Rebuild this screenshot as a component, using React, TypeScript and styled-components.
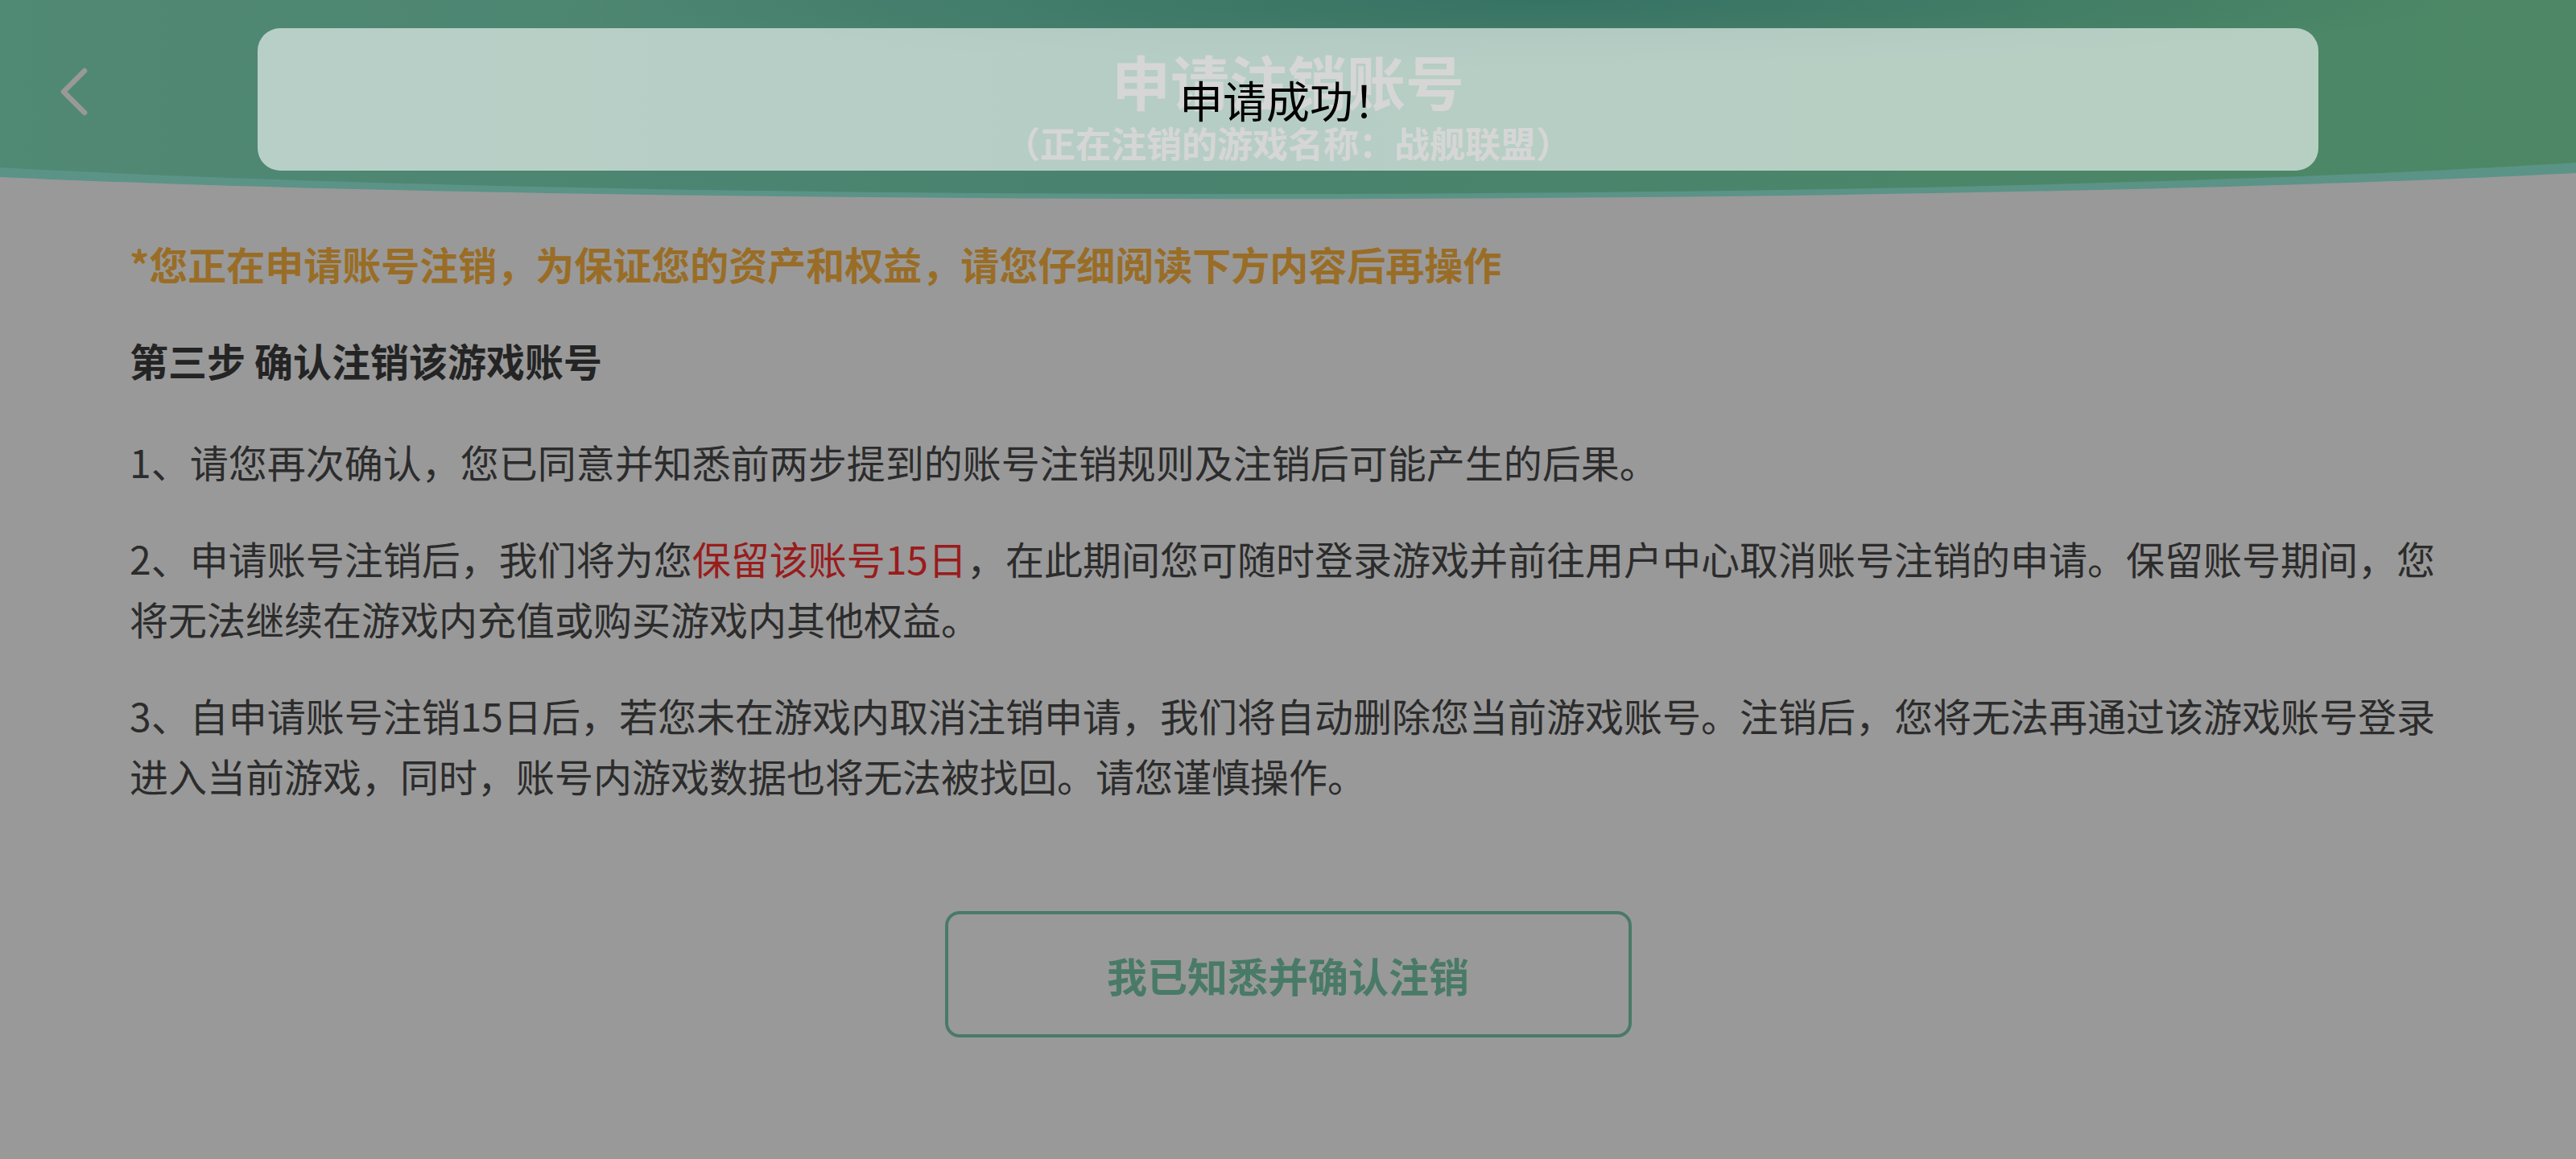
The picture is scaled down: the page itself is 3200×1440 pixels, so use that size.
import React from 'react';
import styled, { createGlobalStyle } from 'styled-components';

const GlobalStyle = createGlobalStyle`
  html, body {
    margin: 0;
    padding: 0;
    background: #ffffff;
  }
  body {
    font-family: 'Noto Sans CJK SC', 'Noto Sans', sans-serif;
  }
  * {
    box-sizing: border-box;
  }
`;

const Page = styled.div`
  position: relative;
  min-height: 1440px;
  background: #ffffff;
  overflow: hidden;
`;

const Header = styled.header`
  position: relative;
  height: 260px;
  display: grid;
  grid-template-columns: 1fr auto 1fr;
  padding-top: 56px;
`;

const HeaderArt = styled.svg`
  position: absolute;
  inset: 0;
  width: 100%;
  height: 100%;
  z-index: 0;
`;

const BackButton = styled.button`
  position: relative;
  z-index: 1;
  justify-self: start;
  align-self: start;
  margin: 28px 0 0 72px;
  padding: 0;
  width: 40px;
  height: 60px;
  border: none;
  background: transparent;
  cursor: pointer;
`;

const TitleBlock = styled.div`
  position: relative;
  z-index: 1;
  display: flex;
  flex-direction: column;
  align-items: center;
  gap: 10px;
`;

const Title = styled.h1`
  margin: 0;
  font-size: 73px;
  line-height: 86px;
  font-weight: 700;
  color: #ffffff;
`;

const SubTitle = styled.div`
  font-size: 44px;
  line-height: 50px;
  font-weight: 700;
  color: #ffffff;
`;

const Content = styled.main`
  display: flex;
  flex-direction: column;
  gap: 45px;
  padding: 30px 160px 0 161px;
`;

const Text = styled.p<{ $tone?: 'warn' | 'strong' }>`
  margin: 0;
  font-size: 48px;
  line-height: 75px;
  font-weight: ${(p) => (p.$tone ? 700 : 400)};
  color: ${(p) => (p.$tone === 'warn' ? '#ffb640' : p.$tone === 'strong' ? '#3d3d3d' : '#4a4a4a')};
  margin-bottom: ${(p) => (p.$tone === 'strong' ? '6px' : '0')};
`;

const Highlight = styled.span`
  color: #ff3030;
`;

const Actions = styled.div`
  display: flex;
  justify-content: center;
  padding-top: 131px;
`;

const ConfirmButton = styled.button`
  width: 853px;
  height: 157px;
  border: 4px solid #7bcbad;
  border-radius: 18px;
  background: transparent;
  font-family: inherit;
  font-size: 50px;
  font-weight: 700;
  color: #7bcbad;
  cursor: pointer;
`;

const Mask = styled.div`
  position: fixed;
  inset: 0;
  z-index: 10;
  background: rgba(0, 0, 0, 0.4);
`;

const Toast = styled.div`
  position: fixed;
  z-index: 11;
  top: 35px;
  left: 320px;
  right: 320px;
  height: 177px;
  border-radius: 28px;
  background: rgba(255, 255, 255, 0.6);
  display: flex;
  align-items: center;
  justify-content: center;
  font-size: 54px;
  color: #000000;
`;

const BackIcon = () => (
  <svg width="40" height="60" viewBox="0 0 40 60">
    <polyline
      points="33,4 7,30 33,56"
      fill="none"
      stroke="#ffffff"
      strokeWidth="6.5"
      strokeLinecap="round"
      strokeLinejoin="round"
    />
  </svg>
);

const HeaderBackground = () => (
  <HeaderArt viewBox="0 0 3200 260" preserveAspectRatio="none">
    <defs>
      <linearGradient id="hdrGreen" x1="0" y1="0" x2="1" y2="0">
        <stop offset="0" stopColor="#86e4c2" />
        <stop offset="0.45" stopColor="#7ad9b8" />
        <stop offset="0.75" stopColor="#7ddfb0" />
        <stop offset="1" stopColor="#80e2aa" />
      </linearGradient>
      <radialGradient id="hdrShade" cx="0.6" cy="0" r="0.35">
        <stop offset="0" stopColor="#5cbfa6" stopOpacity="1" />
        <stop offset="1" stopColor="#5cbfa6" stopOpacity="0" />
      </radialGradient>
    </defs>
    <path d="M0,0 H3200 V215 C2400,257 800,257 0,220 Z" fill="#98f5e2" />
    <path d="M0,0 H3200 V202 C2400,253 800,253 0,208 Z" fill="url(#hdrGreen)" />
    <path d="M0,0 H3200 V202 C2400,253 800,253 0,208 Z" fill="url(#hdrShade)" />
  </HeaderArt>
);

export default function App() {
  return (
    <>
      <GlobalStyle />
      <Page>
        <Header>
          <HeaderBackground />
          <BackButton aria-label="返回">
            <BackIcon />
          </BackButton>
          <TitleBlock>
            <Title>申请注销账号</Title>
            <SubTitle>（正在注销的游戏名称：战舰联盟）</SubTitle>
          </TitleBlock>
          <div />
        </Header>

        <Content>
          <Text $tone="warn">*您正在申请账号注销，为保证您的资产和权益，请您仔细阅读下方内容后再操作</Text>
          <Text $tone="strong">第三步 确认注销该游戏账号</Text>
          <Text>1、请您再次确认，您已同意并知悉前两步提到的账号注销规则及注销后可能产生的后果。</Text>
          <Text>
            2、申请账号注销后，我们将为您<Highlight>保留该账号15日</Highlight>
            ，在此期间您可随时登录游戏并前往用户中心取消账号注销的申请。保留账号期间，您将无法继续在游戏内充值或购买游戏内其他权益。
          </Text>
          <Text>
            3、自申请账号注销15日后，若您未在游戏内取消注销申请，我们将自动删除您当前游戏账号。注销后，您将无法再通过该游戏账号登录进入当前游戏，同时，账号内游戏数据也将无法被找回。请您谨慎操作。
          </Text>
        </Content>

        <Actions>
          <ConfirmButton>我已知悉并确认注销</ConfirmButton>
        </Actions>

        <Mask />
        <Toast>申请成功！</Toast>
      </Page>
    </>
  );
}
